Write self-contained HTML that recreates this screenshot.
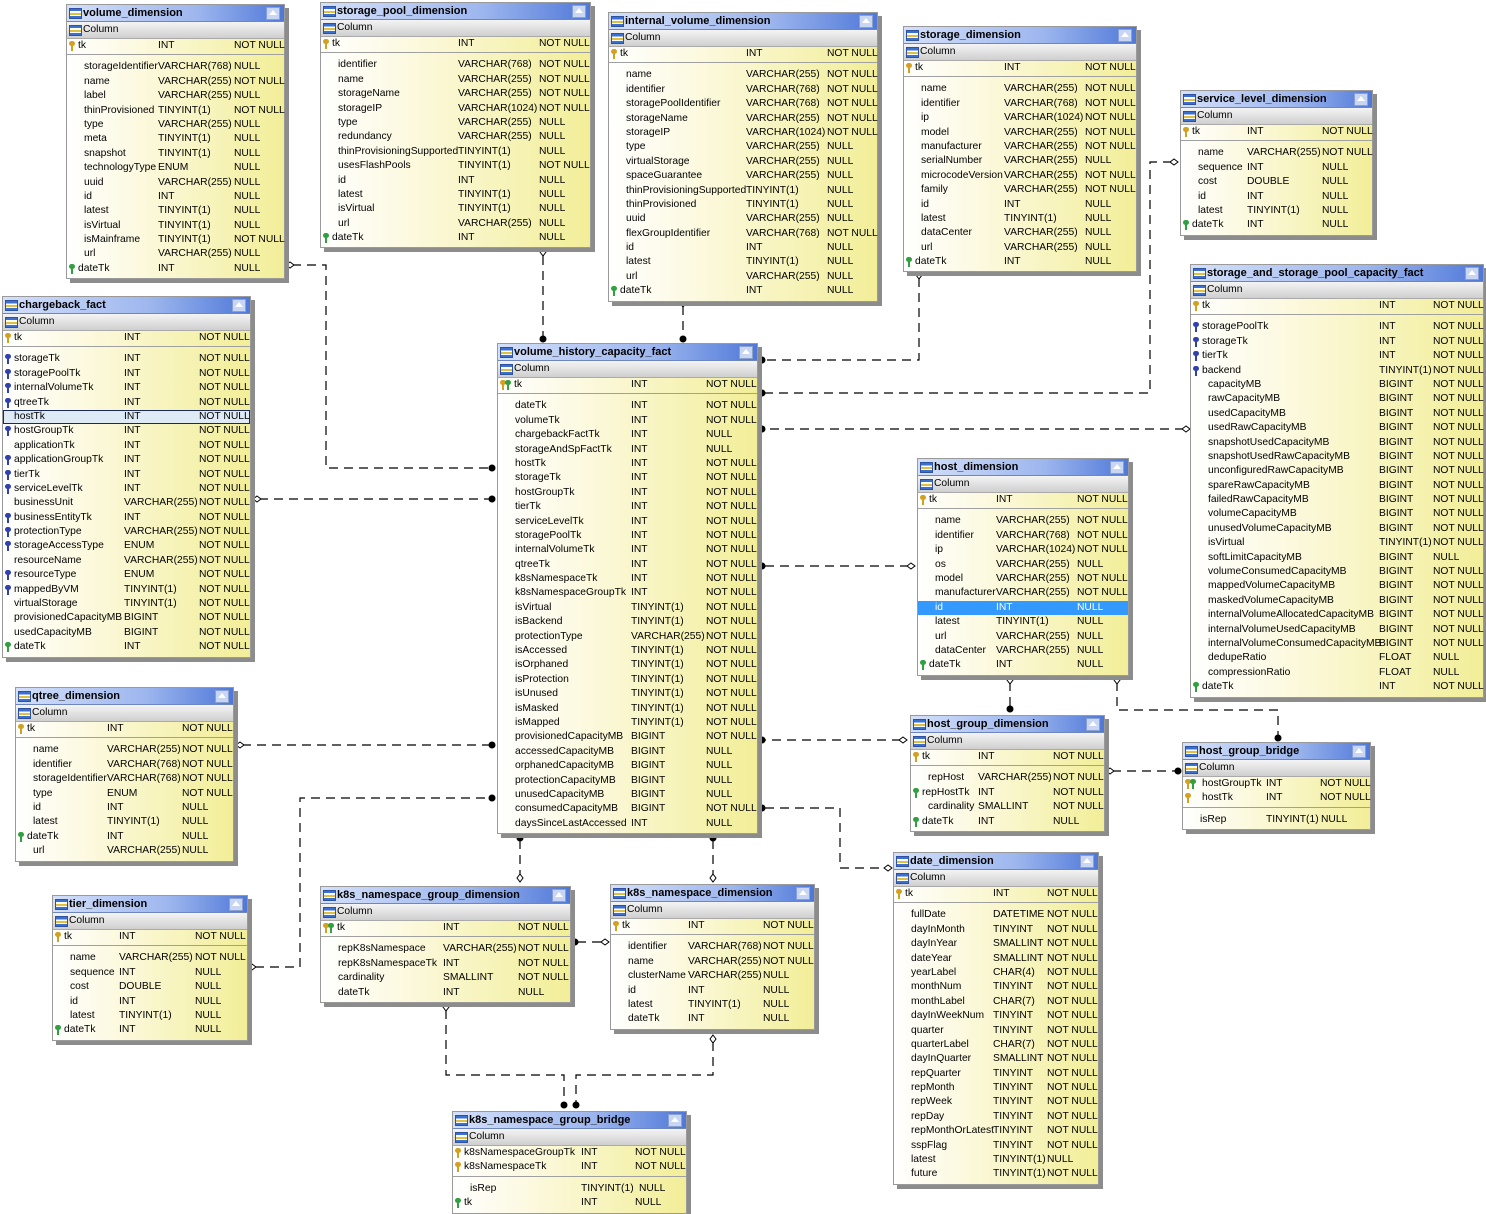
<!DOCTYPE html>
<html><head><meta charset="utf-8"><style>
body{margin:0;width:1486px;height:1213px;background:#fff;position:relative;overflow:hidden;font-family:"Liberation Sans",Arial,sans-serif;font-size:10.3px;color:#000}
.t{position:absolute;background:linear-gradient(to right,#fff 0%,#fbf8d8 40%,#f2ee98 100%);border:1px solid #9a9a9a;box-shadow:4px 4px 0 #8c8c8c;padding-bottom:2px}
.h{height:16px;line-height:16px;background:linear-gradient(to right,#d4e0fa,#9db6ee 60%,#4f78d8);font-weight:bold;font-size:11px;padding-left:16px;position:relative;border-bottom:1px solid #6d86c0}
.c{height:16px;line-height:16px;background:linear-gradient(#f4f4f4,#cfcfcf);padding-left:16px;position:relative;border-bottom:1px solid #aaa}
.h:before,.c:before{content:"";position:absolute;left:2px;top:3px;width:11px;height:9px;border:1px solid #3050a0;background:linear-gradient(#3a70d0 0 25%,#fff 25% 45%,#e0c040 45% 65%,#fff 65% 80%,#3a70d0 80%)}
.h:after{content:"";position:absolute;right:4px;top:2px;width:12px;height:11px;border:1px solid #8aa0d0;background:#c8d6f4}
.h i{position:absolute;right:7px;top:5px;width:0;height:0;border-left:4px solid transparent;border-right:4px solid transparent;border-bottom:5px solid #fff;z-index:2}
.r{position:relative;height:14.4px;line-height:14.4px;white-space:nowrap}
.r b{font-weight:normal;position:absolute;left:17px}
.pk b{left:11px}
.r u{text-decoration:none;position:absolute;left:var(--t)}
.r s{text-decoration:none;position:absolute;left:var(--n)}
.sp{height:5px;border-top:1px solid #a0a0a0;margin-top:1px}
.k{position:absolute;left:2px;top:2px;width:6px;height:10px}
.k:before{content:"";position:absolute;left:0;top:0;width:6px;height:5px;border-radius:3px;background:var(--kc)}
.k:after{content:"";position:absolute;left:2px;top:4px;width:2px;height:6px;background:var(--kc)}
.p{--kc:#d4a020}.f{--kc:#3040b0}.g{--kc:#30a040}
.k2{left:7px}
.sel{background:#3399ff;color:#fff}
.hl{background:#dfeaf7;outline:1px solid #1a2a60;outline-offset:-1px}
svg{position:absolute;left:0;top:0}
</style></head><body>
<svg width="1486" height="1213"><g fill="none" stroke="#000" stroke-width="1.2" stroke-dasharray="9,6">
<polyline points="292,265 326,265 326,468 490,468"/>
<polyline points="259,499 490,499"/>
<polyline points="543,256 543,336"/>
<polyline points="683,306 683,336"/>
<polyline points="919,278 919,360 765,360"/>
<polyline points="1172,162 1150,162 1150,393 765,393"/>
<polyline points="1184,429 765,429"/>
<polyline points="909,566 765,566"/>
<polyline points="901,740 765,740"/>
<polyline points="242,745 490,745"/>
<polyline points="255,967 300,967 300,798 490,798"/>
<polyline points="765,808 840,808 840,868 886,868"/>
<polyline points="520,840 520,876"/>
<polyline points="713,840 713,876"/>
<polyline points="577,942 603,942"/>
<polyline points="1010,682 1010,706"/>
<polyline points="1117,682 1117,710 1278,710 1278,735"/>
<polyline points="1112,771 1176,771"/>
<polyline points="446,1010 446,1075 564,1075 564,1102"/>
<polyline points="713,1042 713,1075 576,1075 576,1102"/>
</g>
<g fill="#000">
<circle cx="492" cy="468" r="3.5"/><circle cx="492" cy="499" r="3.5"/><circle cx="543" cy="339" r="3.5"/><circle cx="683" cy="339" r="3.5"/>
<circle cx="762" cy="360" r="3.5"/><circle cx="762" cy="393" r="3.5"/><circle cx="762" cy="429" r="3.5"/><circle cx="762" cy="566" r="3.5"/>
<circle cx="762" cy="740" r="3.5"/><circle cx="492" cy="745" r="3.5"/><circle cx="492" cy="798" r="3.5"/><circle cx="762" cy="808" r="3.5"/>
<circle cx="520" cy="838" r="3.5"/><circle cx="713" cy="838" r="3.5"/><circle cx="575" cy="942" r="3.5"/><circle cx="1010" cy="709" r="3.5"/>
<circle cx="1278" cy="738" r="3.5"/><circle cx="1178" cy="771" r="3.5"/><circle cx="564" cy="1105" r="3.5"/><circle cx="576" cy="1105" r="3.5"/>
</g>
<g fill="#fff" stroke="#000">
<path d="M286,265 l4,-3 4,3 -4,3z"/><path d="M253,499 l4,-3 4,3 -4,3z"/><path d="M543,248 l3,4 -3,4 -3,-4z"/><path d="M683,299 l3,4 -3,4 -3,-4z"/>
<path d="M919,271 l3,4 -3,4 -3,-4z"/><path d="M1170,162 l4,-3 4,3 -4,3z"/><path d="M1182,429 l4,-3 4,3 -4,3z"/><path d="M907,566 l4,-3 4,3 -4,3z"/>
<path d="M899,740 l4,-3 4,3 -4,3z"/><path d="M236,745 l4,-3 4,3 -4,3z"/><path d="M248,967 l4,-3 4,3 -4,3z"/><path d="M884,868 l4,-3 4,3 -4,3z"/>
<path d="M520,874 l3,4 -3,4 -3,-4z"/><path d="M713,874 l3,4 -3,4 -3,-4z"/><path d="M601,942 l4,-3 4,3 -4,3z"/><path d="M1010,676 l3,4 -3,4 -3,-4z"/>
<path d="M1117,676 l3,4 -3,4 -3,-4z"/><path d="M1106,771 l4,-3 4,3 -4,3z"/><path d="M446,1003 l3,4 -3,4 -3,-4z"/><path d="M713,1035 l3,4 -3,4 -3,-4z"/>
</g></svg>

<div class="t" style="left:66px;top:4px;width:217px;--t:91px;--n:167px"><div class="h">volume_dimension<i></i></div><div class="c">Column</div>
<div class="r pk"><span class="k p"></span><b>tk</b><u>INT</u><s>NOT NULL</s></div><div class="sp"></div>
<div class="r"><b>storageIdentifier</b><u>VARCHAR(768)</u><s>NULL</s></div>
<div class="r"><b>name</b><u>VARCHAR(255)</u><s>NOT NULL</s></div>
<div class="r"><b>label</b><u>VARCHAR(255)</u><s>NULL</s></div>
<div class="r"><b>thinProvisioned</b><u>TINYINT(1)</u><s>NOT NULL</s></div>
<div class="r"><b>type</b><u>VARCHAR(255)</u><s>NULL</s></div>
<div class="r"><b>meta</b><u>TINYINT(1)</u><s>NULL</s></div>
<div class="r"><b>snapshot</b><u>TINYINT(1)</u><s>NULL</s></div>
<div class="r"><b>technologyType</b><u>ENUM</u><s>NULL</s></div>
<div class="r"><b>uuid</b><u>VARCHAR(255)</u><s>NULL</s></div>
<div class="r"><b>id</b><u>INT</u><s>NULL</s></div>
<div class="r"><b>latest</b><u>TINYINT(1)</u><s>NULL</s></div>
<div class="r"><b>isVirtual</b><u>TINYINT(1)</u><s>NULL</s></div>
<div class="r"><b>isMainframe</b><u>TINYINT(1)</u><s>NOT NULL</s></div>
<div class="r"><b>url</b><u>VARCHAR(255)</u><s>NULL</s></div>
<div class="r pk"><span class="k g"></span><b>dateTk</b><u>INT</u><s>NULL</s></div></div>

<div class="t" style="left:320px;top:2px;width:269px;--t:137px;--n:218px"><div class="h">storage_pool_dimension<i></i></div><div class="c">Column</div>
<div class="r pk"><span class="k p"></span><b>tk</b><u>INT</u><s>NOT NULL</s></div><div class="sp"></div>
<div class="r"><b>identifier</b><u>VARCHAR(768)</u><s>NOT NULL</s></div>
<div class="r"><b>name</b><u>VARCHAR(255)</u><s>NOT NULL</s></div>
<div class="r"><b>storageName</b><u>VARCHAR(255)</u><s>NOT NULL</s></div>
<div class="r"><b>storageIP</b><u>VARCHAR(1024)</u><s>NOT NULL</s></div>
<div class="r"><b>type</b><u>VARCHAR(255)</u><s>NULL</s></div>
<div class="r"><b>redundancy</b><u>VARCHAR(255)</u><s>NULL</s></div>
<div class="r"><b>thinProvisioningSupported</b><u>TINYINT(1)</u><s>NULL</s></div>
<div class="r"><b>usesFlashPools</b><u>TINYINT(1)</u><s>NOT NULL</s></div>
<div class="r"><b>id</b><u>INT</u><s>NULL</s></div>
<div class="r"><b>latest</b><u>TINYINT(1)</u><s>NULL</s></div>
<div class="r"><b>isVirtual</b><u>TINYINT(1)</u><s>NULL</s></div>
<div class="r"><b>url</b><u>VARCHAR(255)</u><s>NULL</s></div>
<div class="r pk"><span class="k g"></span><b>dateTk</b><u>INT</u><s>NULL</s></div></div>

<div class="t" style="left:608px;top:12px;width:268px;--t:137px;--n:218px"><div class="h">internal_volume_dimension<i></i></div><div class="c">Column</div>
<div class="r pk"><span class="k p"></span><b>tk</b><u>INT</u><s>NOT NULL</s></div><div class="sp"></div>
<div class="r"><b>name</b><u>VARCHAR(255)</u><s>NOT NULL</s></div>
<div class="r"><b>identifier</b><u>VARCHAR(768)</u><s>NOT NULL</s></div>
<div class="r"><b>storagePoolIdentifier</b><u>VARCHAR(768)</u><s>NOT NULL</s></div>
<div class="r"><b>storageName</b><u>VARCHAR(255)</u><s>NOT NULL</s></div>
<div class="r"><b>storageIP</b><u>VARCHAR(1024)</u><s>NOT NULL</s></div>
<div class="r"><b>type</b><u>VARCHAR(255)</u><s>NULL</s></div>
<div class="r"><b>virtualStorage</b><u>VARCHAR(255)</u><s>NULL</s></div>
<div class="r"><b>spaceGuarantee</b><u>VARCHAR(255)</u><s>NULL</s></div>
<div class="r"><b>thinProvisioningSupported</b><u>TINYINT(1)</u><s>NULL</s></div>
<div class="r"><b>thinProvisioned</b><u>TINYINT(1)</u><s>NULL</s></div>
<div class="r"><b>uuid</b><u>VARCHAR(255)</u><s>NULL</s></div>
<div class="r"><b>flexGroupIdentifier</b><u>VARCHAR(768)</u><s>NOT NULL</s></div>
<div class="r"><b>id</b><u>INT</u><s>NULL</s></div>
<div class="r"><b>latest</b><u>TINYINT(1)</u><s>NULL</s></div>
<div class="r"><b>url</b><u>VARCHAR(255)</u><s>NULL</s></div>
<div class="r pk"><span class="k g"></span><b>dateTk</b><u>INT</u><s>NULL</s></div></div>

<div class="t" style="left:903px;top:26px;width:232px;--t:100px;--n:181px"><div class="h">storage_dimension<i></i></div><div class="c">Column</div>
<div class="r pk"><span class="k p"></span><b>tk</b><u>INT</u><s>NOT NULL</s></div><div class="sp"></div>
<div class="r"><b>name</b><u>VARCHAR(255)</u><s>NOT NULL</s></div>
<div class="r"><b>identifier</b><u>VARCHAR(768)</u><s>NOT NULL</s></div>
<div class="r"><b>ip</b><u>VARCHAR(1024)</u><s>NOT NULL</s></div>
<div class="r"><b>model</b><u>VARCHAR(255)</u><s>NOT NULL</s></div>
<div class="r"><b>manufacturer</b><u>VARCHAR(255)</u><s>NOT NULL</s></div>
<div class="r"><b>serialNumber</b><u>VARCHAR(255)</u><s>NULL</s></div>
<div class="r"><b>microcodeVersion</b><u>VARCHAR(255)</u><s>NOT NULL</s></div>
<div class="r"><b>family</b><u>VARCHAR(255)</u><s>NOT NULL</s></div>
<div class="r"><b>id</b><u>INT</u><s>NULL</s></div>
<div class="r"><b>latest</b><u>TINYINT(1)</u><s>NULL</s></div>
<div class="r"><b>dataCenter</b><u>VARCHAR(255)</u><s>NULL</s></div>
<div class="r"><b>url</b><u>VARCHAR(255)</u><s>NULL</s></div>
<div class="r pk"><span class="k g"></span><b>dateTk</b><u>INT</u><s>NULL</s></div></div>

<div class="t" style="left:1180px;top:90px;width:191px;--t:66px;--n:141px"><div class="h">service_level_dimension<i></i></div><div class="c">Column</div>
<div class="r pk"><span class="k p"></span><b>tk</b><u>INT</u><s>NOT NULL</s></div><div class="sp"></div>
<div class="r"><b>name</b><u>VARCHAR(255)</u><s>NOT NULL</s></div>
<div class="r"><b>sequence</b><u>INT</u><s>NULL</s></div>
<div class="r"><b>cost</b><u>DOUBLE</u><s>NULL</s></div>
<div class="r"><b>id</b><u>INT</u><s>NULL</s></div>
<div class="r"><b>latest</b><u>TINYINT(1)</u><s>NULL</s></div>
<div class="r pk"><span class="k g"></span><b>dateTk</b><u>INT</u><s>NULL</s></div></div>

<div class="t" style="left:1190px;top:264px;width:292px;--t:188px;--n:242px"><div class="h">storage_and_storage_pool_capacity_fact<i></i></div><div class="c">Column</div>
<div class="r pk"><span class="k p"></span><b>tk</b><u>INT</u><s>NOT NULL</s></div><div class="sp"></div>
<div class="r pk"><span class="k f"></span><b>storagePoolTk</b><u>INT</u><s>NOT NULL</s></div>
<div class="r pk"><span class="k f"></span><b>storageTk</b><u>INT</u><s>NOT NULL</s></div>
<div class="r pk"><span class="k f"></span><b>tierTk</b><u>INT</u><s>NOT NULL</s></div>
<div class="r pk"><span class="k f"></span><b>backend</b><u>TINYINT(1)</u><s>NOT NULL</s></div>
<div class="r"><b>capacityMB</b><u>BIGINT</u><s>NOT NULL</s></div>
<div class="r"><b>rawCapacityMB</b><u>BIGINT</u><s>NOT NULL</s></div>
<div class="r"><b>usedCapacityMB</b><u>BIGINT</u><s>NOT NULL</s></div>
<div class="r"><b>usedRawCapacityMB</b><u>BIGINT</u><s>NOT NULL</s></div>
<div class="r"><b>snapshotUsedCapacityMB</b><u>BIGINT</u><s>NOT NULL</s></div>
<div class="r"><b>snapshotUsedRawCapacityMB</b><u>BIGINT</u><s>NOT NULL</s></div>
<div class="r"><b>unconfiguredRawCapacityMB</b><u>BIGINT</u><s>NOT NULL</s></div>
<div class="r"><b>spareRawCapacityMB</b><u>BIGINT</u><s>NOT NULL</s></div>
<div class="r"><b>failedRawCapacityMB</b><u>BIGINT</u><s>NOT NULL</s></div>
<div class="r"><b>volumeCapacityMB</b><u>BIGINT</u><s>NOT NULL</s></div>
<div class="r"><b>unusedVolumeCapacityMB</b><u>BIGINT</u><s>NOT NULL</s></div>
<div class="r"><b>isVirtual</b><u>TINYINT(1)</u><s>NOT NULL</s></div>
<div class="r"><b>softLimitCapacityMB</b><u>BIGINT</u><s>NULL</s></div>
<div class="r"><b>volumeConsumedCapacityMB</b><u>BIGINT</u><s>NOT NULL</s></div>
<div class="r"><b>mappedVolumeCapacityMB</b><u>BIGINT</u><s>NOT NULL</s></div>
<div class="r"><b>maskedVolumeCapacityMB</b><u>BIGINT</u><s>NOT NULL</s></div>
<div class="r"><b>internalVolumeAllocatedCapacityMB</b><u>BIGINT</u><s>NOT NULL</s></div>
<div class="r"><b>internalVolumeUsedCapacityMB</b><u>BIGINT</u><s>NOT NULL</s></div>
<div class="r"><b>internalVolumeConsumedCapacityMB</b><u>BIGINT</u><s>NOT NULL</s></div>
<div class="r"><b>dedupeRatio</b><u>FLOAT</u><s>NULL</s></div>
<div class="r"><b>compressionRatio</b><u>FLOAT</u><s>NULL</s></div>
<div class="r pk"><span class="k g"></span><b>dateTk</b><u>INT</u><s>NOT NULL</s></div></div>

<div class="t" style="left:2px;top:296px;width:247px;--t:121px;--n:196px"><div class="h">chargeback_fact<i></i></div><div class="c">Column</div>
<div class="r pk"><span class="k p"></span><b>tk</b><u>INT</u><s>NOT NULL</s></div><div class="sp"></div>
<div class="r pk"><span class="k f"></span><b>storageTk</b><u>INT</u><s>NOT NULL</s></div>
<div class="r pk"><span class="k f"></span><b>storagePoolTk</b><u>INT</u><s>NOT NULL</s></div>
<div class="r pk"><span class="k f"></span><b>internalVolumeTk</b><u>INT</u><s>NOT NULL</s></div>
<div class="r pk"><span class="k f"></span><b>qtreeTk</b><u>INT</u><s>NOT NULL</s></div>
<div class="r pk hl"><b>hostTk</b><u>INT</u><s>NOT NULL</s></div>
<div class="r pk"><span class="k f"></span><b>hostGroupTk</b><u>INT</u><s>NOT NULL</s></div>
<div class="r pk"><b>applicationTk</b><u>INT</u><s>NOT NULL</s></div>
<div class="r pk"><span class="k f"></span><b>applicationGroupTk</b><u>INT</u><s>NOT NULL</s></div>
<div class="r pk"><span class="k f"></span><b>tierTk</b><u>INT</u><s>NOT NULL</s></div>
<div class="r pk"><span class="k f"></span><b>serviceLevelTk</b><u>INT</u><s>NOT NULL</s></div>
<div class="r pk"><b>businessUnit</b><u>VARCHAR(255)</u><s>NOT NULL</s></div>
<div class="r pk"><span class="k f"></span><b>businessEntityTk</b><u>INT</u><s>NOT NULL</s></div>
<div class="r pk"><span class="k f"></span><b>protectionType</b><u>VARCHAR(255)</u><s>NOT NULL</s></div>
<div class="r pk"><span class="k f"></span><b>storageAccessType</b><u>ENUM</u><s>NOT NULL</s></div>
<div class="r pk"><b>resourceName</b><u>VARCHAR(255)</u><s>NOT NULL</s></div>
<div class="r pk"><span class="k f"></span><b>resourceType</b><u>ENUM</u><s>NOT NULL</s></div>
<div class="r pk"><span class="k f"></span><b>mappedByVM</b><u>TINYINT(1)</u><s>NOT NULL</s></div>
<div class="r pk"><b>virtualStorage</b><u>TINYINT(1)</u><s>NOT NULL</s></div>
<div class="r pk"><b>provisionedCapacityMB</b><u>BIGINT</u><s>NOT NULL</s></div>
<div class="r pk"><b>usedCapacityMB</b><u>BIGINT</u><s>NOT NULL</s></div>
<div class="r pk"><span class="k g"></span><b>dateTk</b><u>INT</u><s>NOT NULL</s></div></div>

<div class="t" style="left:497px;top:343px;width:259px;--t:133px;--n:208px"><div class="h">volume_history_capacity_fact<i></i></div><div class="c">Column</div>
<div class="r pk"><span class="k p"></span><span class="k g k2"></span><b style="left:16px">tk</b><u>INT</u><s>NOT NULL</s></div><div class="sp"></div>
<div class="r"><b>dateTk</b><u>INT</u><s>NOT NULL</s></div>
<div class="r"><b>volumeTk</b><u>INT</u><s>NOT NULL</s></div>
<div class="r"><b>chargebackFactTk</b><u>INT</u><s>NULL</s></div>
<div class="r"><b>storageAndSpFactTk</b><u>INT</u><s>NULL</s></div>
<div class="r"><b>hostTk</b><u>INT</u><s>NOT NULL</s></div>
<div class="r"><b>storageTk</b><u>INT</u><s>NOT NULL</s></div>
<div class="r"><b>hostGroupTk</b><u>INT</u><s>NOT NULL</s></div>
<div class="r"><b>tierTk</b><u>INT</u><s>NOT NULL</s></div>
<div class="r"><b>serviceLevelTk</b><u>INT</u><s>NOT NULL</s></div>
<div class="r"><b>storagePoolTk</b><u>INT</u><s>NOT NULL</s></div>
<div class="r"><b>internalVolumeTk</b><u>INT</u><s>NOT NULL</s></div>
<div class="r"><b>qtreeTk</b><u>INT</u><s>NOT NULL</s></div>
<div class="r"><b>k8sNamespaceTk</b><u>INT</u><s>NOT NULL</s></div>
<div class="r"><b>k8sNamespaceGroupTk</b><u>INT</u><s>NOT NULL</s></div>
<div class="r"><b>isVirtual</b><u>TINYINT(1)</u><s>NOT NULL</s></div>
<div class="r"><b>isBackend</b><u>TINYINT(1)</u><s>NOT NULL</s></div>
<div class="r"><b>protectionType</b><u>VARCHAR(255)</u><s>NOT NULL</s></div>
<div class="r"><b>isAccessed</b><u>TINYINT(1)</u><s>NOT NULL</s></div>
<div class="r"><b>isOrphaned</b><u>TINYINT(1)</u><s>NOT NULL</s></div>
<div class="r"><b>isProtection</b><u>TINYINT(1)</u><s>NOT NULL</s></div>
<div class="r"><b>isUnused</b><u>TINYINT(1)</u><s>NOT NULL</s></div>
<div class="r"><b>isMasked</b><u>TINYINT(1)</u><s>NOT NULL</s></div>
<div class="r"><b>isMapped</b><u>TINYINT(1)</u><s>NOT NULL</s></div>
<div class="r"><b>provisionedCapacityMB</b><u>BIGINT</u><s>NOT NULL</s></div>
<div class="r"><b>accessedCapacityMB</b><u>BIGINT</u><s>NULL</s></div>
<div class="r"><b>orphanedCapacityMB</b><u>BIGINT</u><s>NULL</s></div>
<div class="r"><b>protectionCapacityMB</b><u>BIGINT</u><s>NULL</s></div>
<div class="r"><b>unusedCapacityMB</b><u>BIGINT</u><s>NULL</s></div>
<div class="r"><b>consumedCapacityMB</b><u>BIGINT</u><s>NOT NULL</s></div>
<div class="r"><b>daysSinceLastAccessed</b><u>INT</u><s>NULL</s></div></div>

<div class="t" style="left:917px;top:458px;width:210px;--t:78px;--n:159px"><div class="h">host_dimension<i></i></div><div class="c">Column</div>
<div class="r pk"><span class="k p"></span><b>tk</b><u>INT</u><s>NOT NULL</s></div><div class="sp"></div>
<div class="r"><b>name</b><u>VARCHAR(255)</u><s>NOT NULL</s></div>
<div class="r"><b>identifier</b><u>VARCHAR(768)</u><s>NOT NULL</s></div>
<div class="r"><b>ip</b><u>VARCHAR(1024)</u><s>NOT NULL</s></div>
<div class="r"><b>os</b><u>VARCHAR(255)</u><s>NULL</s></div>
<div class="r"><b>model</b><u>VARCHAR(255)</u><s>NOT NULL</s></div>
<div class="r"><b>manufacturer</b><u>VARCHAR(255)</u><s>NOT NULL</s></div>
<div class="r sel"><b>id</b><u>INT</u><s>NULL</s></div>
<div class="r"><b>latest</b><u>TINYINT(1)</u><s>NULL</s></div>
<div class="r"><b>url</b><u>VARCHAR(255)</u><s>NULL</s></div>
<div class="r"><b>dataCenter</b><u>VARCHAR(255)</u><s>NULL</s></div>
<div class="r pk"><span class="k g"></span><b>dateTk</b><u>INT</u><s>NULL</s></div></div>

<div class="t" style="left:15px;top:687px;width:217px;--t:91px;--n:166px"><div class="h">qtree_dimension<i></i></div><div class="c">Column</div>
<div class="r pk"><span class="k p"></span><b>tk</b><u>INT</u><s>NOT NULL</s></div><div class="sp"></div>
<div class="r"><b>name</b><u>VARCHAR(255)</u><s>NOT NULL</s></div>
<div class="r"><b>identifier</b><u>VARCHAR(768)</u><s>NOT NULL</s></div>
<div class="r"><b>storageIdentifier</b><u>VARCHAR(768)</u><s>NOT NULL</s></div>
<div class="r"><b>type</b><u>ENUM</u><s>NOT NULL</s></div>
<div class="r"><b>id</b><u>INT</u><s>NULL</s></div>
<div class="r"><b>latest</b><u>TINYINT(1)</u><s>NULL</s></div>
<div class="r pk"><span class="k g"></span><b>dateTk</b><u>INT</u><s>NULL</s></div>
<div class="r"><b>url</b><u>VARCHAR(255)</u><s>NULL</s></div></div>

<div class="t" style="left:910px;top:715px;width:193px;--t:67px;--n:142px"><div class="h">host_group_dimension<i></i></div><div class="c">Column</div>
<div class="r pk"><span class="k p"></span><b>tk</b><u>INT</u><s>NOT NULL</s></div><div class="sp"></div>
<div class="r"><b>repHost</b><u>VARCHAR(255)</u><s>NOT NULL</s></div>
<div class="r pk"><span class="k g"></span><b>repHostTk</b><u>INT</u><s>NOT NULL</s></div>
<div class="r"><b>cardinality</b><u>SMALLINT</u><s>NOT NULL</s></div>
<div class="r pk"><span class="k g"></span><b>dateTk</b><u>INT</u><s>NULL</s></div></div>

<div class="t" style="left:1182px;top:742px;width:187px;--t:83px;--n:137px"><div class="h">host_group_bridge<i></i></div><div class="c">Column</div>
<div class="r pk"><span class="k p"></span><span class="k g k2"></span><b style="left:19px">hostGroupTk</b><u>INT</u><s>NOT NULL</s></div>
<div class="r pk"><span class="k p"></span><b style="left:19px">hostTk</b><u>INT</u><s>NOT NULL</s></div><div class="sp"></div>
<div class="r"><b>isRep</b><u>TINYINT(1)</u><s style="left:138px">NULL</s></div></div>

<div class="t" style="left:893px;top:852px;width:204px;--t:99px;--n:153px"><div class="h">date_dimension<i></i></div><div class="c">Column</div>
<div class="r pk"><span class="k p"></span><b>tk</b><u>INT</u><s>NOT NULL</s></div><div class="sp"></div>
<div class="r"><b>fullDate</b><u>DATETIME</u><s>NOT NULL</s></div>
<div class="r"><b>dayInMonth</b><u>TINYINT</u><s>NOT NULL</s></div>
<div class="r"><b>dayInYear</b><u>SMALLINT</u><s>NOT NULL</s></div>
<div class="r"><b>dateYear</b><u>SMALLINT</u><s>NOT NULL</s></div>
<div class="r"><b>yearLabel</b><u>CHAR(4)</u><s>NOT NULL</s></div>
<div class="r"><b>monthNum</b><u>TINYINT</u><s>NOT NULL</s></div>
<div class="r"><b>monthLabel</b><u>CHAR(7)</u><s>NOT NULL</s></div>
<div class="r"><b>dayInWeekNum</b><u>TINYINT</u><s>NOT NULL</s></div>
<div class="r"><b>quarter</b><u>TINYINT</u><s>NOT NULL</s></div>
<div class="r"><b>quarterLabel</b><u>CHAR(7)</u><s>NOT NULL</s></div>
<div class="r"><b>dayInQuarter</b><u>SMALLINT</u><s>NOT NULL</s></div>
<div class="r"><b>repQuarter</b><u>TINYINT</u><s>NOT NULL</s></div>
<div class="r"><b>repMonth</b><u>TINYINT</u><s>NOT NULL</s></div>
<div class="r"><b>repWeek</b><u>TINYINT</u><s>NOT NULL</s></div>
<div class="r"><b>repDay</b><u>TINYINT</u><s>NOT NULL</s></div>
<div class="r"><b>repMonthOrLatest</b><u>TINYINT</u><s>NOT NULL</s></div>
<div class="r"><b>sspFlag</b><u>TINYINT</u><s>NOT NULL</s></div>
<div class="r"><b>latest</b><u>TINYINT(1)</u><s>NULL</s></div>
<div class="r"><b>future</b><u>TINYINT(1)</u><s>NOT NULL</s></div></div>

<div class="t" style="left:52px;top:895px;width:194px;--t:66px;--n:142px"><div class="h">tier_dimension<i></i></div><div class="c">Column</div>
<div class="r pk"><span class="k p"></span><b>tk</b><u>INT</u><s>NOT NULL</s></div><div class="sp"></div>
<div class="r"><b>name</b><u>VARCHAR(255)</u><s>NOT NULL</s></div>
<div class="r"><b>sequence</b><u>INT</u><s>NULL</s></div>
<div class="r"><b>cost</b><u>DOUBLE</u><s>NULL</s></div>
<div class="r"><b>id</b><u>INT</u><s>NULL</s></div>
<div class="r"><b>latest</b><u>TINYINT(1)</u><s>NULL</s></div>
<div class="r pk"><span class="k g"></span><b>dateTk</b><u>INT</u><s>NULL</s></div></div>

<div class="t" style="left:320px;top:886px;width:249px;--t:122px;--n:197px"><div class="h">k8s_namespace_group_dimension<i></i></div><div class="c">Column</div>
<div class="r pk"><span class="k p"></span><span class="k g k2"></span><b style="left:16px">tk</b><u>INT</u><s>NOT NULL</s></div><div class="sp"></div>
<div class="r"><b>repK8sNamespace</b><u>VARCHAR(255)</u><s>NOT NULL</s></div>
<div class="r"><b>repK8sNamespaceTk</b><u>INT</u><s>NOT NULL</s></div>
<div class="r"><b>cardinality</b><u>SMALLINT</u><s>NOT NULL</s></div>
<div class="r"><b>dateTk</b><u>INT</u><s>NULL</s></div></div>

<div class="t" style="left:610px;top:884px;width:203px;--t:77px;--n:152px"><div class="h">k8s_namespace_dimension<i></i></div><div class="c">Column</div>
<div class="r pk"><span class="k p"></span><b>tk</b><u>INT</u><s>NOT NULL</s></div><div class="sp"></div>
<div class="r"><b>identifier</b><u>VARCHAR(768)</u><s>NOT NULL</s></div>
<div class="r"><b>name</b><u>VARCHAR(255)</u><s>NOT NULL</s></div>
<div class="r"><b>clusterName</b><u>VARCHAR(255)</u><s>NULL</s></div>
<div class="r"><b>id</b><u>INT</u><s>NULL</s></div>
<div class="r"><b>latest</b><u>TINYINT(1)</u><s>NULL</s></div>
<div class="r"><b>dateTk</b><u>INT</u><s>NULL</s></div></div>

<div class="t" style="left:452px;top:1111px;width:233px;--t:128px;--n:182px"><div class="h">k8s_namespace_group_bridge<i></i></div><div class="c">Column</div>
<div class="r pk"><span class="k p"></span><b>k8sNamespaceGroupTk</b><u>INT</u><s>NOT NULL</s></div>
<div class="r pk"><span class="k p"></span><b>k8sNamespaceTk</b><u>INT</u><s>NOT NULL</s></div><div class="sp"></div>
<div class="r"><b>isRep</b><u>TINYINT(1)</u><s style="left:186px">NULL</s></div>
<div class="r pk"><span class="k g"></span><b>tk</b><u>INT</u><s>NULL</s></div></div>
</body></html>
